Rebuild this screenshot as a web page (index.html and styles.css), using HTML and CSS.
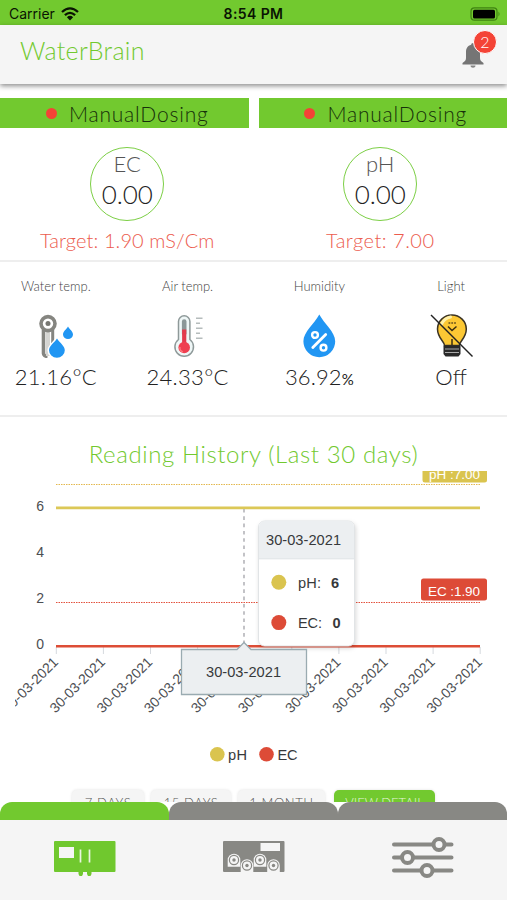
FILE: index.html
```html
<!DOCTYPE html>
<html lang="en">
<head>
    <meta charset="UTF-8">
    <meta name="viewport" content="width=device-width, initial-scale=1.0">
    <title>WaterBrain</title>
    <link rel="stylesheet" href="styles.css">
</head>
<body>
    <div class="status-bar">
        <div class="carrier">
            <span>Carrier</span>
            <svg width="18" height="14" viewBox="0 0 18 14">
                <path d="M1 5Q9-2.200 17 5M3.900 8.200Q9 3.500 14.100 8.200" fill="none" stroke="#0a1403" stroke-width="2.300"/>
                <path d="M5.900 10.200Q9 7.500 12.100 10.200L9 13.500z" fill="#0a1403"/>
            </svg>
        </div>
        <span class="clock">8:54 PM</span>
        <div class="battery">
            <svg width="31" height="14" viewBox="0 0 31 14">
                <rect x="1" y="0.800" width="26" height="12.400" rx="3.500" fill="none" stroke="#3f8212" stroke-width="1.200"/>
                <rect x="3" y="2.800" width="22" height="8.600" rx="1.500" fill="#000"/>
                <path d="M28.500 4.500q2 2.500 0 5z" fill="#3f8212"/>
            </svg>
        </div>
    </div>

    <header class="header">
        <h1 class="logo">WaterBrain</h1>
        <div class="bell">
            <svg width="24" height="26" viewBox="0 0 24 26">
                <path d="M12 0c1 0 1.800.7 1.800 1.800C17.500 2.800 19 5.500 19 9v6c0 2 1 3.500 3.500 5v1.500h-21V20C4 18.500 5 17 5 15V9c0-3.500 1.500-6.200 5.200-7.200C10.200.7 11 0 12 0z" fill="#757575"/>
                <path d="M9.500 22.500h5c0 3-5 3-5 0z" fill="#858585"/>
            </svg>
            <span class="badge">2</span>
        </div>
    </header>

    <main class="content">
        <!-- Dosing -->
        <section class="dosing">
            <div class="dosing-item dosing-ec">
                <div class="mode"><i class="dot"></i><span>ManualDosing</span></div>
                <div class="gauge">
                    <span class="gauge-name">EC</span>
                    <span class="gauge-value">0.00</span>
                </div>
                <p class="target">Target: 1.90 mS/Cm</p>
            </div>
            <div class="dosing-item dosing-ph">
                <div class="mode"><i class="dot"></i><span>ManualDosing</span></div>
                <div class="gauge">
                    <span class="gauge-name">pH</span>
                    <span class="gauge-value">0.00</span>
                </div>
                <p class="target">Target: 7.00</p>
            </div>
        </section>

        <!-- Sensors -->
        <section class="sensors">
            <div class="sensor">
                <span class="sensor-name">Water temp.</span>
                <svg width="44" height="44" viewBox="0 0 44 44">
                    <path d="M9.500 16v23.500a4.500 3 0 0 0 4 3" fill="none" stroke="#858580" stroke-width="3.600"/>
                    <path d="M14 17v25" stroke="#d5d5d2" stroke-width="4"/>
                    <path d="M18.700 15v14" stroke="#858580" stroke-width="3"/>
                    <circle cx="14" cy="9.600" r="7" fill="#fff" stroke="#858580" stroke-width="3.600"/>
                    <circle cx="14" cy="9.600" r="2.500" fill="#777772"/>
                    <path d="M23 24.500c3 4.500 7.800 7.700 7.800 11.700a7.900 7.500 0 0 1-15.800 0c0-4 5-7.200 8-11.700z" fill="#2196f3" stroke="#fff" stroke-width="3" paint-order="stroke"/>
                    <path d="M34 12.500c2 3.300 5 5 5 8a5 4.500 0 0 1-10 0c0-3 3-4.700 5-8z" fill="#2196f3"/>
                </svg>
                <span class="sensor-value">21.16°C</span>
            </div>
            <div class="sensor">
                <span class="sensor-name">Air temp.</span>
                <svg width="44" height="44" viewBox="0 0 44 44">
                    <path d="M12.500 25.500V7.500a5.700 5.700 0 0 1 11.400 0v18a9.300 9.300 0 1 1-11.400 0z" fill="#eff7f7" stroke="#8e9999" stroke-width="1.500"/>
                    <path d="M18.200 7.500v12" stroke="#8b9798" stroke-width="4.600" stroke-linecap="round"/>
                    <path d="M18.200 15.500v18" stroke="#e33b4d" stroke-width="4.200"/>
                    <circle cx="18.200" cy="33.500" r="5.800" fill="#ef3f50"/>
                    <path d="M14 33a4.500 4.500 0 0 0 3 5" fill="none" stroke="#ff777d" stroke-width="1.300"/>
                    <path d="M30 4.300h6.500M30 9.300h4M30 14.300h6.500M30 19.300h4M30 24.300h6.500" stroke="#b5bcbc" stroke-width="1.600"/>
                </svg>
                <span class="sensor-value">24.33°C</span>
            </div>
            <div class="sensor">
                <span class="sensor-name">Humidity</span>
                <svg width="44" height="44" viewBox="0 0 44 44">
                    <path d="M22.300.500C27 9.500 38.200 18 38.200 27.300a15.900 15.900 0 0 1-31.800 0C6.400 18 17.600 9.500 22.300.500z" fill="#2196f3"/>
                    <path d="M15.800 33.500L28.700 20.500" stroke="#fff" stroke-width="2.800" stroke-linecap="round"/>
                    <g fill="none" stroke="#fff" stroke-width="2.400">
                        <circle cx="18" cy="21" r="2.900"/>
                        <circle cx="26.500" cy="33.700" r="2.900"/>
                    </g>
                </svg>
                <span class="sensor-value humidity">36.92<small>%</small></span>
            </div>
            <div class="sensor">
                <span class="sensor-name">Light</span>
                <svg width="44" height="44" viewBox="0 0 44 44">
                    <path d="M15.500 31.500c0-4-7-7.500-7-16.500a14.400 14 0 0 1 28.800 0c0 9-7 12.500-7 16.500z" fill="#fcc834" stroke="#3c3424" stroke-width="1.500"/>
                    <path d="M12.500 10q3-6 9-7" fill="none" stroke="#fff0a8" stroke-width="3" stroke-linecap="round"/>
                    <path d="M23 31v-6M19 12.500l4 4 4.500-4" fill="none" stroke="#3a2d10" stroke-width="1.500"/>
                    <path d="M19.500 9h7.500" stroke="#66501c" stroke-width="1.700" stroke-dasharray="1.800 1"/>
                    <path d="M14.500 31.500h17v8.500l-2 2.500h-13l-2-2.500z" fill="#292929"/>
                    <path d="M16 35h14M16 38.500h14" stroke="#aaa" stroke-width="1"/>
                    <path d="M2 1l41.500 41.500" stroke="#222" stroke-width="1.400"/>
                </svg>
                <span class="sensor-value light">Off</span>
            </div>
        </section>

        <!-- Reading history -->
        <section class="history">
            <h2>Reading History (Last 30 days)</h2>
            <svg class="chart" width="477" height="308" viewBox="15 471 477 308">
                <g class="y-labels">
                    <text x="44" y="510.500">6</text>
                    <text x="44" y="557">4</text>
                    <text x="44" y="603">2</text>
                    <text x="44" y="649">0</text>
                </g>
                <g class="ticks"></g>
                <g class="x-labels"></g>

                <path d="M56 484.500H480" class="mark" stroke="#e3b94f"/>
                <path d="M56 602.500H480" class="mark" stroke="#e2513c"/>
                <path d="M56 507.800H480" stroke="#dcc857" stroke-width="2.800"/>
                <path d="M244 509V645" stroke="#b4b4b9" stroke-width="1.600" stroke-dasharray="3.600 3.700"/>
                <path d="M56 646.300H480" stroke="#dd4d36" stroke-width="2.600"/>

                <rect x="422.500" y="461" width="64.500" height="21.500" rx="2.500" fill="#dac44f"/>
                <text x="429" y="478.500" class="mark-label" textLength="51">pH :7.00</text>
                <rect x="421" y="578.500" width="66" height="22" rx="2.500" fill="#dd4b37"/>
                <text x="428" y="595.500" class="mark-label" textLength="52">EC :1.90</text>

                <g class="tooltip">
                    <rect x="258.500" y="521" width="96" height="125" rx="6" fill="#fff" stroke="#e1e4e6"/>
                    <path d="M259 558.500V527a6 6 0 0 1 6-6h83a6 6 0 0 1 6 6v31.500z" fill="#eceff1"/>
                    <path d="M259 558.800h95" stroke="#dde1e4"/>
                </g>
                <text x="266" y="545" textLength="75">30-03-2021</text>
                <circle cx="278.800" cy="582.300" r="7.500" fill="#dac44f"/>
                <text x="298" y="588" textLength="23">pH:</text>
                <text x="331" y="588" class="bold">6</text>
                <circle cx="278.800" cy="622.600" r="7.500" fill="#dd4b37"/>
                <text x="298" y="628" textLength="24">EC:</text>
                <text x="332.500" y="628" class="bold">0</text>

                <path d="M181.500 649.500H237L244 642.500L251 649.500H306.500V694.500H181.500z" fill="#eceff1" stroke="#9aabb1" stroke-width="1.300"/>
                <text x="206" y="677.300" textLength="75">30-03-2021</text>

                <circle cx="217.300" cy="754.300" r="7.300" fill="#dac44f"/>
                <text x="228" y="760" textLength="19">pH</text>
                <circle cx="266.500" cy="754.300" r="7.300" fill="#dd4b37"/>
                <text x="277.500" y="760" textLength="20">EC</text>
            </svg>
            <div class="ranges">
                <button class="range">7 DAYS</button>
                <button class="range range-15">15 DAYS</button>
                <button class="range range-month">1 MONTH</button>
                <button class="range range-detail">VIEW DETAIL</button>
            </div>
        </section>
    </main>

    <nav class="tabs">
        <a class="tab tab-active">
            <svg width="62" height="42" viewBox="0 0 62 42">
                <rect y="5" width="61.500" height="31" rx="1" fill="#70c82e"/>
                <path d="M5 11h15v11H5z" fill="#f5f5f5"/>
                <path d="M26.500 13.500v13M35.500 13.500v13" stroke="#e9f5df" stroke-width="1.700"/>
                <path d="M24.500 36h4.500v2l-1 2h-2.500l-1-2zM33 36h4.500v2l-1 2H34l-1-2z" fill="#70c82e"/>
            </svg>
        </a>
        <a class="tab">
            <svg width="62" height="42" viewBox="0 0 62 42">
                <defs>
                    <g id="pump">
                        <path d="M-6.300 0a6.300 6.300 0 0 1 12.600 0v6.800h-12.600z" fill="#f5f5f5"/>
                        <circle r="4.600" fill="#f5f5f5" stroke="#888884" stroke-width="1.200"/>
                        <circle r="1.700" fill="#888884"/>
                    </g>
                </defs>
                <rect y="5" width="61.500" height="31" rx="1" fill="#888884"/>
                <path d="M37.500 7h19.500v8H37.500z" fill="#f5f5f5"/>
                <use href="#pump" x="11" y="24"/>
                <use href="#pump" x="24" y="29.500"/>
                <use href="#pump" x="37" y="24"/>
                <use href="#pump" x="50.500" y="29.500"/>
                <path d="M5 31.500h12V36H5zM31 31.500h12V36H31z" fill="#888884"/>
            </svg>
        </a>
        <a class="tab">
            <svg width="62" height="42" viewBox="0 0 62 42">
                <g fill="#f5f5f5" stroke="#888884" stroke-width="4" stroke-linecap="round">
                    <path d="M2 8.500h57.500M2 21.500h57.500M2 34.500h57.500"/>
                    <circle cx="47" cy="8.500" r="5.500"/>
                    <circle cx="15.500" cy="21.500" r="5.500"/>
                    <circle cx="35" cy="34.500" r="5.500"/>
                </g>
            </svg>
        </a>
    </nav>

    <script>
        // X axis ticks and dates
        const svgNs = 'http://www.w3.org/2000/svg';
        const ticks = document.querySelector('.ticks');
        const labels = document.querySelector('.x-labels');

        for (let i = 0; i < 10; i++) {
            const x = 56.3 + i * 47.1;

            const tick = document.createElementNS(svgNs, 'path');
            tick.setAttribute('d', `M${x} 647v7`);
            ticks.appendChild(tick);

            const label = document.createElementNS(svgNs, 'text');
            label.setAttribute('transform', `translate(${x + 2.7} 663) rotate(-45)`);
            label.textContent = '30-03-2021';
            labels.appendChild(label);
        }
    </script>
</body>
</html>
```

FILE: styles.css
```css
* {
    margin: 0;
    padding: 0;
    box-sizing: border-box;
}

body {
    height: 900px;
    display: flex;
    flex-direction: column;
    overflow: hidden;
    background: #fff;
    color: #222;
    font-family: 'Lato', sans-serif;
    font-weight: 300;
}

.status-bar {
    height: 25px;
    flex-shrink: 0;
    display: flex;
    align-items: center;
    justify-content: space-between;
    padding: 2px 6px 0 9px;
    background: #72c92f;
    color: #0a1403;
    font: 400 14px 'Inter', sans-serif;
}

.carrier {
    flex: 1;
    display: flex;
    align-items: center;
    gap: 6px;
}

.clock {
    padding-right: 3px;
    font-weight: 600;
    letter-spacing: 0.4px;
}

.battery {
    flex: 1;
    display: flex;
    justify-content: flex-end;
}

.header {
    height: 59px;
    flex-shrink: 0;
    display: flex;
    justify-content: space-between;
    padding: 9px 22px 0 20px;
    background: #f5f5f5;
    box-shadow: 0 2px 5px rgba(0, 0, 0, 0.45);
}

.logo {
    color: #72c92f;
    font-size: 25px;
    font-weight: 300;
    line-height: 32px;
    letter-spacing: 0.3px;
}

.bell {
    position: relative;
    height: 26px;
    margin-top: 9px;
}

.badge {
    position: absolute;
    top: -13px;
    right: -12px;
    width: 24px;
    height: 24px;
    border: 1px solid #fff;
    border-radius: 50%;
    background: #f44336;
    color: #fff;
    font-size: 16px;
    line-height: 22px;
    text-align: center;
}

.content {
    flex: 1;
    min-height: 0;
    overflow: hidden;
    padding-top: 14px;
}

.dosing {
    height: 164px;
    display: flex;
    gap: 10px;
    border-bottom: 2px solid #eee;
}

.dosing-item {
    flex: 1;
    display: flex;
    flex-direction: column;
    align-items: center;
}

.mode {
    width: 100%;
    height: 30px;
    display: flex;
    align-items: center;
    justify-content: center;
    gap: 12px;
    padding-left: 6px;
    background: #72c92f;
    color: #16300a;
    font-size: 21px;
    letter-spacing: 0.8px;
}

.dot {
    width: 11px;
    height: 11px;
    border-radius: 50%;
    background: #f44336;
}

.gauge {
    width: 74px;
    height: 74px;
    display: flex;
    flex-direction: column;
    align-items: center;
    margin-top: 19px;
    padding-top: 4px;
    border: 1.5px solid #7ccf45;
    border-radius: 50%;
}

.dosing-ec .gauge,
.dosing-ec .target {
    margin-left: 6px;
}

.dosing-ph .gauge,
.dosing-ph .target {
    margin-right: 5px;
}

.gauge-name {
    color: #555;
    font-size: 22px;
    line-height: 24px;
}

.gauge-value {
    font-size: 26px;
    line-height: 36px;
    letter-spacing: -0.1px;
}

.target {
    margin-top: 6px;
    color: #ec5c4e;
    font-size: 20px;
    line-height: 26px;
    letter-spacing: 0.1px;
}

.dosing-ph .target {
    letter-spacing: 0.5px;
}

.sensors {
    height: 155px;
    display: grid;
    grid-template-columns: repeat(4, 1fr);
    column-gap: 20px;
    padding-top: 14px;
    border-bottom: 2px solid #eee;
}

.sensor {
    display: flex;
    flex-direction: column;
    align-items: center;
}

.sensor-name {
    color: #444;
    font-size: 13px;
    line-height: 20px;
    margin-bottom: 18px;
}

.sensor-value {
    margin-top: 5px;
    font-size: 22px;
    line-height: 28px;
    letter-spacing: 0.3px;
}

.humidity {
    letter-spacing: 0.1px;
}

.light {
    letter-spacing: 0;
}

.sensor-value small {
    font-size: 15px;
    font-weight: 400;
}

.history h2 {
    height: 54px;
    padding-top: 22px;
    color: #72c92f;
    font-size: 24px;
    font-weight: 300;
    line-height: 30px;
    letter-spacing: 0.6px;
    text-align: center;
}

.chart {
    display: block;
    margin: 0 15px;
    overflow: hidden;
    font: 14.6px 'Liberation Sans', sans-serif;
    fill: #37393b;
}

.y-labels text,
.x-labels text {
    font-size: 14px;
    fill: #4c4e52;
    text-anchor: end;
}

.ticks path {
    stroke: #d5d9de;
}

.mark {
    stroke-width: 1;
    stroke-dasharray: 1.5 1;
}

.mark-label {
    font-size: 13.5px;
    fill: #fff;
}

.bold {
    font-weight: bold;
}

.tooltip {
    filter: drop-shadow(1px 2px 2px rgba(0, 0, 0, 0.15));
}

.ranges {
    display: flex;
    gap: 7px;
    padding: 11px 0 0 72px;
}

.range {
    width: 72px;
    height: 25px;
    border: 0;
    border-radius: 5px;
    background: #f5f5f5;
    box-shadow: 0 0 3px rgba(0, 0, 0, 0.12);
    color: #555;
    font: 300 13px 'Lato', sans-serif;
    letter-spacing: 0.6px;
}

.range-15 {
    width: 80px;
}

.range-month {
    width: 87px;
}

.range-detail {
    width: 101px;
    margin-left: 2px;
    background: #72c92f;
    color: #e4f5d8;
    letter-spacing: 0;
}

.tabs {
    height: 98px;
    flex-shrink: 0;
    display: flex;
}

.tab {
    flex: 1;
    display: flex;
    justify-content: center;
    padding-top: 16px;
    border-top: 18px solid #888884;
    border-radius: 12px 12px 0 0;
    background: #f5f5f5;
}

.tab-active {
    border-color: #72c92f;
}
```
